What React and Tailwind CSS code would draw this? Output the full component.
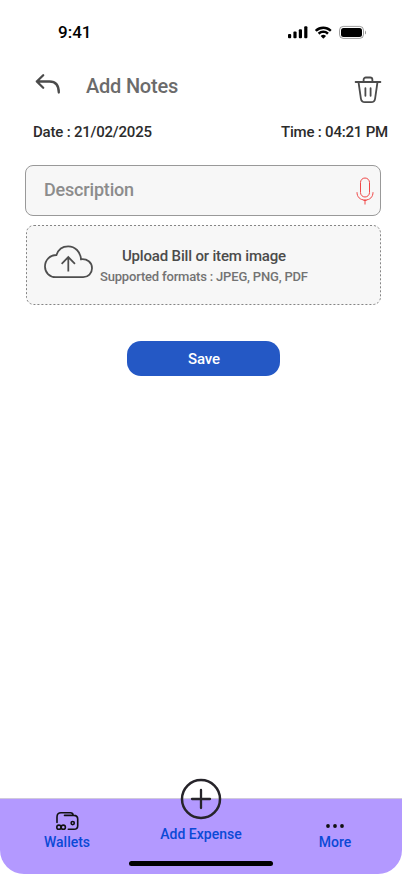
function StatusBar() {
  return (
    <div className="flex h-16 items-center justify-between pl-[58px] pr-[36px] text-black">
      <span className="text-[17px] font-medium leading-5">9:41</span>
      <svg width="78" height="14" viewBox="0 0 78 14" fill="none">
        <g fill="#000">
          <rect x="0" y="9" width="3.2" height="4.2" rx="1" />
          <rect x="5.4" y="6.6" width="3.2" height="6.6" rx="1" />
          <rect x="10.8" y="4.2" width="3.2" height="9" rx="1" />
          <rect x="16.2" y="1.2" width="3.2" height="12" rx="1" />
          <path d="M35.3 3.9c2.4 0 4.7.9 6.4 2.6.1.1.3.1.5 0l1.2-1.3c.1-.1.1-.4 0-.5a11.8 11.8 0 0 0-16.3 0c-.1.1-.1.4 0 .5l1.3 1.3c.1.1.3.1.5 0a9.3 9.3 0 0 1 6.4-2.6Zm0 4.1c1.3 0 2.6.5 3.5 1.4.1.1.4.1.5 0l1.3-1.3c.1-.1.1-.4 0-.5a7.7 7.7 0 0 0-10.6 0c-.1.1-.1.4 0 .5l1.3 1.3c.1.1.4.1.5 0 .9-.9 2.2-1.4 3.5-1.4Zm2.5 2.8c.1.1.1.3 0 .5l-2.2 2.2c-.1.1-.4.1-.5 0l-2.2-2.2c-.1-.1-.1-.4 0-.5a4 4 0 0 1 4.9 0Z" />
          <rect x="53" y="2.9" width="21" height="9" rx="2.5" />
          <path d="M77 5.6v3.8c.7-.3 1.2-1 1.2-1.9s-.5-1.600-1.200-1.900Z" opacity=".4" />
        </g>
        <rect x="51.5" y="1.4" width="24" height="12" rx="3.8" stroke="#000" opacity=".38" />
      </svg>
    </div>
  );
}

function BackIcon() {
  return (
    <svg width="26" height="22" viewBox="0 0 26 22" fill="none" stroke="#4b4b4b" strokeWidth="2.3" strokeLinecap="round" strokeLinejoin="round">
      <path d="M8.2 2.2 1.8 8.5l6.400 6.300M1.800 8.500H14.500c6 0 9.300 3.500 9.300 11" />
    </svg>
  );
}

function TrashIcon() {
  return (
    <svg width="28" height="28" viewBox="0 0 28 28" fill="none" stroke="#4b4b4b" strokeWidth="1.800" strokeLinecap="round" strokeLinejoin="round">
      <path d="M1.600 6h24.800M9.600 6V3.800A2.300 2.300 0 0 1 11.900 1.500h4.200a2.300 2.300 0 0 1 2.300 2.300V6M4.500 6l2.400 16.600c.4 2.500 1.600 3.600 3.900 3.600h6.400c2.300 0 3.500-1.100 3.900-3.600L23.500 6M11.400 12.200v7.600M16.600 12.200v7.600" />
    </svg>
  );
}

function MicIcon() {
  return (
    <svg width="18" height="28" viewBox="0 0 18 28" fill="none" stroke="#f04848" strokeWidth="1">
      <rect x="4.500" y="1" width="9" height="19" rx="4.500" />
      <path d="M1 15.200c0 4.800 3 7.800 8 7.800s8-3 8-7.800M9 23v4.500M7.500 23.500h3" />
    </svg>
  );
}

function CloudIcon() {
  return (
    <svg width="49" height="34" viewBox="0 0 50 34" preserveAspectRatio="none" fill="none" stroke="#4e4e4e" strokeWidth="1.800">
      <path d="M12 32.200C5.500 32.200 1 27.500 1 21.500 1 15 6 10 12.700 10 14.500 4.600 19 1.300 24.700 1.300c7 0 12.600 5.500 13 13C44 13.600 49 17.400 49 23.300c0 5.100-3.900 8.900-9 8.900Z" />
      <path d="M24.800 26.500V12.200M18 18.800l6.800-6.700 6.800 6.700" />
    </svg>
  );
}

function WalletIcon() {
  return (
    <svg width="24" height="20" viewBox="0 0 24 20" fill="none" stroke="#111" strokeWidth="1.600" strokeLinecap="round">
      <path d="M2 11.500V6c0-2.900 1.500-4.200 4-4.200h9.500c1.500 0 2.500.7 2.700 2.500M9.500 4.400h9.300c2.500 0 3.900 1.200 3.900 3.700v6.600c0 2.500-1.300 3.600-3.700 3.600h-5.700" />
      <circle cx="17.700" cy="12.100" r="1.600" />
      <circle cx="3.900" cy="16.200" r="2.100" />
      <circle cx="8.300" cy="16.200" r="2.100" />
    </svg>
  );
}

function AddIcon() {
  return (
    <svg width="42" height="42" viewBox="0 0 42 42" fill="none" stroke="#26242a" strokeWidth="2.500">
      <circle cx="21" cy="21" r="19" />
      <path d="M21 12v18M12 21h18" strokeWidth="2.300" strokeLinecap="round" />
    </svg>
  );
}

export default function App() {
  return (
    <div className="flex h-[874px] w-[402px] flex-col overflow-hidden bg-white font-['Roboto',sans-serif] font-medium">
      <StatusBar />
      <header className="flex h-[50px] items-start pl-[35px] pr-[20px]">
        <button className="mt-[9px]"><BackIcon /></button>
        <h1 className="ml-[25px] mt-[10px] text-[20px] leading-6 tracking-[-0.22px] text-[#6b6b6b]">Add Notes</h1>
        <button className="ml-auto mt-[12px]"><TrashIcon /></button>
      </header>
      <div className="mt-2 flex justify-between pl-[33px] pr-[14px] text-[15px] leading-5 tracking-[-0.2px] text-[#2b2b2b]">
        <span>Date : 21/02/2025</span>
        <span>Time : 04:21 PM</span>
      </div>
      <main className="flex flex-col pl-[25px] pr-[21px] pt-[23px]">
        <div className="flex h-[51px] items-center justify-between rounded-[8px] border border-[#999] bg-[#f7f7f7] pl-[18px] pr-[6px]">
          <span className="mb-[2px] text-[18px] leading-6 tracking-[-0.18px] text-[#8c8c8c]">Description</span>
          <MicIcon />
        </div>
        <div className="relative ml-px mt-[9px] flex h-20 items-start rounded-[8px] bg-[#f7f7f7] pl-[18px]">
          <svg className="absolute inset-0" width="355" height="80" fill="none">
            <rect x=".5" y=".5" width="354" height="79" rx="7.500" stroke="#858585" strokeDasharray="2 2" />
          </svg>
          <div className="mt-5"><CloudIcon /></div>
          <div className="ml-[7px] mt-[21px] flex flex-col items-center whitespace-nowrap">
            <span className="text-[15px] leading-5 tracking-[-0.17px] text-[#4b4b4b]">Upload Bill or item image</span>
            <span className="mt-px text-[13px] leading-5 tracking-[-0.18px] text-[#737373]">Supported formats : JPEG, PNG, PDF</span>
          </div>
        </div>
        <button className="ml-[102px] mt-9 h-[35px] w-[153px] rounded-[14px] bg-[#2458c5] pl-px text-[15px] leading-5 tracking-[-0.15px] text-white">Save</button>
      </main>
      <nav className="relative mt-auto h-[76px] rounded-b-[24px] border-t border-[#d0c9dc] bg-[#b399ff] text-[14px] leading-4 text-[#0b49d6]">
        <div className="grid grid-cols-3">
          <div className="flex flex-col items-center pt-[12px]">
            <WalletIcon />
            <span className="mt-[3px]">Wallets</span>
          </div>
          <div className="-mt-[21px] flex flex-col items-center">
            <AddIcon />
            <span className="mt-[6px]">Add Expense</span>
          </div>
          <div className="flex flex-col items-center pt-[25px]">
            <svg width="20" height="4" viewBox="0 0 20 4" fill="#111">
              <circle cx="3" cy="2" r="1.900" /><circle cx="10" cy="2" r="1.900" /><circle cx="17" cy="2" r="1.900" />
            </svg>
            <span className="mt-[6px]">More</span>
          </div>
        </div>
        <div className="absolute bottom-2 left-[129px] h-[5px] w-36 rounded-full bg-black" />
      </nav>
    </div>
  );
}
